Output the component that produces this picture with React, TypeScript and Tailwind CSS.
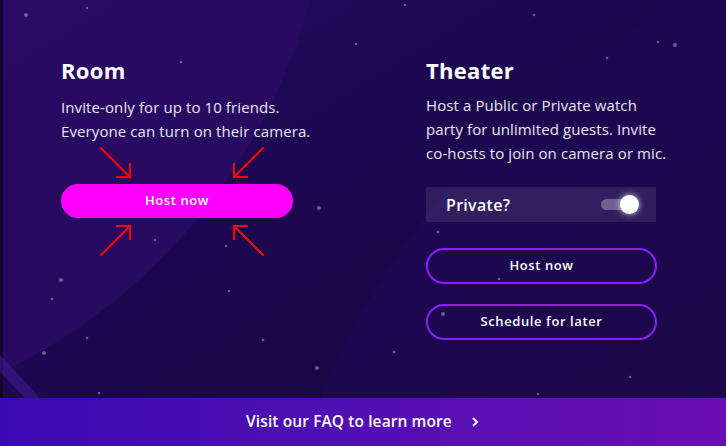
const stars = [
  [26, 15], [87, 8], [181, 62], [155, 240], [61, 280], [52, 299], [87, 338], [99, 393], [44, 353], [226, 246], [229, 291], [263, 340], [319, 208], [356, 44], [405, 5], [534, 15], [675, 45], [658, 42], [607, 58], [438, 232], [443, 314], [394, 352], [538, 394], [630, 377], [317, 368], [499, 279],
]

function Arrow({ d }: { d: string }) {
  return <path d={d} fill="none" stroke="#ff0000" strokeWidth={2} strokeLinecap="square" />
}

export default function App() {
  return (
    <div className="relative w-[726px] h-[446px] overflow-hidden bg-[#180846] font-['Open_Sans',sans-serif] text-white">
      {/* background shapes */}
      <svg className="absolute inset-0 w-full h-full" viewBox="0 0 726 446" preserveAspectRatio="none">
        <defs>
          <linearGradient id="bg" x1="0" y1="0" x2="1" y2="1">
            <stop offset="0%" stopColor="#220a62" />
            <stop offset="100%" stopColor="#140638" />
          </linearGradient>
        </defs>
        <rect width="726" height="446" fill="url(#bg)" />
        <circle cx="-250" cy="-150" r="580" fill="#2c0b66" opacity="0.75" />
        <circle cx="1050" cy="700" r="790" fill="#24085a" opacity="0.45" />
        <rect x="0" y="0" width="3" height="446" fill="#12052e" />
        <path d="M0 355 L40 398 L25 398 L0 372 Z" fill="#4a1aa0" opacity="0.5" />
        {stars.map(([x, y], i) => (
          <circle key={i} cx={x} cy={y} r={i % 4 === 0 ? 2 : 1.3} fill="#ffffff" opacity={0.35} />
        ))}
      </svg>

      <div className="relative flex h-[398px]">
        {/* Room */}
        <div className="relative w-[365px] pl-[61px] pt-[56px]">
          <h2 className="text-[22px] leading-[28px] font-bold tracking-[0.3px]">Room</h2>
          <p className="mt-[11px] text-[15px] leading-[24px] text-white/90 tracking-[0.1px]">
            Invite-only for up to 10 friends.
            <br />
            Everyone can turn on their camera.
          </p>
          <button className="mt-[41px] w-[232px] h-[34px] rounded-full bg-[#ff00ff] text-[13px] font-semibold tracking-[0.6px]">
            Host now
          </button>
          <svg className="absolute left-0 top-0 w-[365px] h-[300px] pointer-events-none" viewBox="0 0 365 300">
            <Arrow d="M101 148 L130 177 M117 177 H130 V164" />
            <Arrow d="M263 148 L234 177 M247 177 H234 V164" />
            <Arrow d="M101 255 L130 226 M117 226 H130 V239" />
            <Arrow d="M263 255 L234 226 M247 226 H234 V239" />
          </svg>
        </div>

        {/* Theater */}
        <div className="flex-1 pl-[61px] pt-[56px]">
          <h2 className="text-[22px] leading-[28px] font-bold tracking-[0.3px]">Theater</h2>
          <p className="mt-[9px] w-[250px] text-[15px] leading-[24px] text-white/90 tracking-[0.1px]">
            Host a Public or Private watch party for unlimited guests. Invite co-hosts to join on camera or mic.
          </p>
          <div className="mt-[22px] w-[230px] h-[35px] flex items-center justify-between pl-[20px] pr-[17px] bg-white/[0.09]">
            <span className="text-[16px] font-semibold tracking-[0.3px]">Private?</span>
            <div className="relative w-[38px] h-[19px] flex items-center">
              <div className="w-[32px] h-[11px] rounded-full bg-white/30" />
              <div className="absolute right-0 top-0 w-[19px] h-[19px] rounded-full bg-white shadow-[0_0_6px_rgba(255,255,255,0.8)]" />
            </div>
          </div>
          <div className="flex flex-col gap-[20px] mt-[26px]">
            <button className="w-[231px] h-[36px] rounded-full border-2 border-[#8a1cff] text-[13px] font-semibold tracking-[0.6px]">
              Host now
            </button>
            <button className="w-[231px] h-[36px] rounded-full border-2 border-[#8a1cff] text-[13px] font-semibold tracking-[0.6px]">
              Schedule for later
            </button>
          </div>
        </div>
      </div>

      {/* footer */}
      <div className="relative h-[48px] flex items-center justify-center gap-[18px] bg-gradient-to-r from-[#3a08b2] to-[#6a0cb4]">
        <span className="text-[15.5px] font-semibold tracking-[0.1px]">Visit our FAQ to learn more</span>
        <svg className="w-[10px] h-[12px]" viewBox="0 0 10 12" fill="none" stroke="white" strokeWidth={2}>
          <path d="M3 2 L7 6 L3 10" />
        </svg>
      </div>
    </div>
  )
}
